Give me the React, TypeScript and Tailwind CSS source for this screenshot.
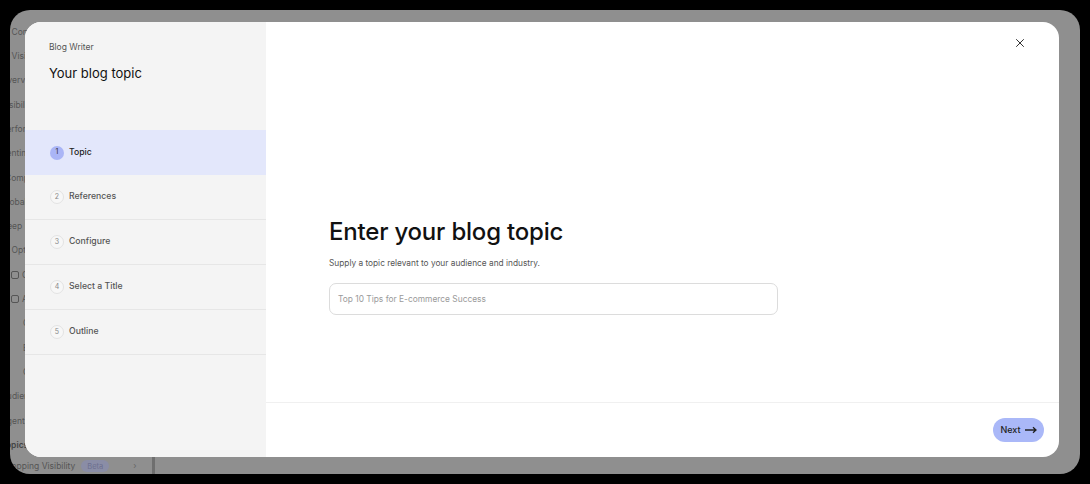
import { X } from "lucide-react";

const bgItems: { label: string; indent: number; bold?: boolean; icon?: "box" | "home" }[] = [
  { label: "AI Content", indent: 0 },
  { label: "AI Visibility", indent: 0 },
  { label: "Overview", indent: 0 },
  { label: "Visibility", indent: 0 },
  { label: "Performance", indent: 0 },
  { label: "Sentiment", indent: 0 },
  { label: "Competitors", indent: 4 },
  { label: "Global", indent: 0 },
  { label: "Deep Research", indent: 0 },
  { label: "AI Optimization", indent: 0 },
  { label: "Content", indent: 10, icon: "box" },
  { label: "Agents", indent: 10, icon: "home" },
  { label: "Create", indent: 22 },
  { label: "Edit", indent: 22 },
  { label: "Check", indent: 22 },
  { label: "Audience", indent: 0 },
  { label: "Agents", indent: 0 },
  { label: "Topics", indent: 0, bold: true },
];

const steps = ["Topic", "References", "Configure", "Select a Title", "Outline"];

function BackgroundApp() {
  return (
    <div className="flex h-full">
      <div className="w-[151px] shrink-0 flex flex-col pt-[10px] ml-[-9px]">
        {bgItems.map((item, i) => (
          <div
            key={i}
            className="h-[24.3px] shrink-0 flex items-center text-[8.5px] text-[#555] whitespace-nowrap"
            style={{ paddingLeft: item.indent }}
          >
            {item.icon && (
              <span className="w-[8px] h-[8px] border border-[#555] rounded-[2px] mr-[3px]" />
            )}
            <span className={item.bold ? "font-semibold text-[#444]" : ""}>{item.label}</span>
          </div>
        ))}
        <div className="h-[18px] shrink-0 flex items-center text-[8.5px] text-[#555] whitespace-nowrap">
          <span>Shopping Visibility</span>
          <span className="ml-[6px] px-[6px] h-[12px] flex items-center rounded-full bg-[#8a8da6] text-[7.5px] text-[#6d7090]">
            Beta
          </span>
          <span className="ml-[24px] text-[#666]">›</span>
        </div>
      </div>
      <div className="w-[3px] bg-[#6f6f6f] mt-auto h-[20px]" />
    </div>
  );
}

export default function App() {
  return (
    <div
      className="w-[1090px] h-[484px] bg-black p-[10px]"
      style={{ fontFamily: "Inter, 'Noto Sans', sans-serif" }}
    >
      <div className="relative w-full h-full rounded-[20px] bg-[#8f8f8f] overflow-hidden">
        <BackgroundApp />

        <div className="absolute left-[15px] top-[12px] right-[21px] bottom-[17px] bg-white rounded-[16px] overflow-hidden flex">
          <aside className="w-[241px] shrink-0 bg-[#f4f4f4] flex flex-col">
            <div className="pl-[24px] pt-[19px] h-[108px]">
              <div className="text-[8.5px] leading-[12px] text-[#555]">Blog Writer</div>
              <div className="mt-[10px] text-[13px] leading-[20px] text-[#111]">Your blog topic</div>
            </div>
            {steps.map((s, i) => {
              const active = i === 0;
              return (
                <div
                  key={s}
                  className={
                    active
                      ? "h-[45px] flex items-center pl-[25px] bg-[#e3e7fb]"
                      : "h-[45px] flex items-center pl-[25px] border-b border-[#e6e6e6]"
                  }
                >
                  <span
                    className={
                      active
                        ? "w-[14px] h-[14px] rounded-full bg-[#aab5f6] text-[#333] text-[7px] flex items-center justify-center"
                        : "w-[14px] h-[14px] rounded-full border border-[#e3e3e3] bg-[#f7f7f7] text-[#888] text-[7px] flex items-center justify-center"
                    }
                  >
                    {i + 1}
                  </span>
                  <span
                    className={
                      active
                        ? "ml-[5px] text-[8.7px] font-medium text-[#222]"
                        : "ml-[5px] text-[8.7px] font-medium text-[#555]"
                    }
                  >
                    {s}
                  </span>
                </div>
              );
            })}
          </aside>

          <main className="flex-1 flex flex-col relative">
            <button className="absolute top-[14px] right-[32px] text-[#222]">
              <X className="w-[14px] h-[14px]" strokeWidth={1.6} />
            </button>
            <div className="flex-1 pl-[63px] pt-[195px]">
              <h1 className="text-[24px] leading-[30px] font-medium text-[#111] tracking-[-0.2px]">
                Enter your blog topic
              </h1>
              <p className="mt-[10px] text-[8.3px] leading-[12px] text-[#555]">
                Supply a topic relevant to your audience and industry.
              </p>
              <div className="mt-[14px] w-[449px] h-[32px] border border-[#dcdcdc] rounded-[7px] flex items-center px-[8px] text-[8.4px] text-[#9a9a9a]">
                Top 10 Tips for E-commerce Success
              </div>
            </div>
            <div className="h-[55px] border-t border-[#f0f0f0] flex items-center justify-end pr-[15px]">
              <button className="w-[51px] h-[24px] rounded-full bg-[#aab8f8] flex items-center justify-center gap-[4px] text-[9px] font-medium text-[#222]">
                Next
                <svg width="12" height="8" viewBox="0 0 12 8" fill="none">
                  <path d="M0 4h10.5M8 1.2L11 4 8 6.8" stroke="#222" strokeWidth="1.3" />
                </svg>
              </button>
            </div>
          </main>
        </div>
      </div>
    </div>
  );
}
